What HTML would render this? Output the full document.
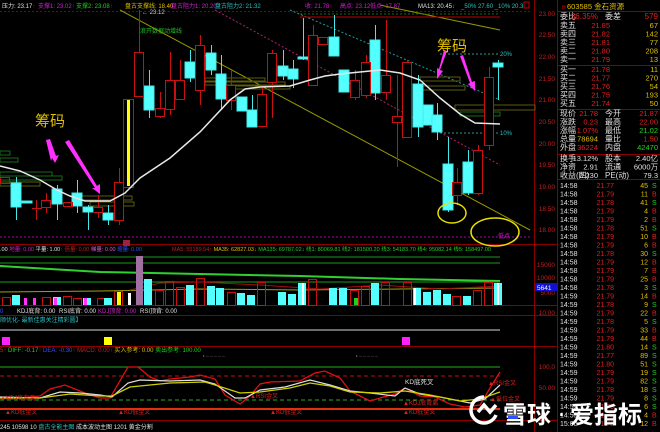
<!DOCTYPE html><html><head><meta charset="utf-8"><style>
body{margin:0;background:#000;width:660px;height:432px;overflow:hidden;font-family:"Liberation Sans","Noto Sans CJK SC",sans-serif}
svg{display:block}
text{font-family:"Liberation Sans","Noto Sans CJK SC",sans-serif}
</style></head><body>
<svg width="660" height="432" viewBox="0 0 660 432" xmlns="http://www.w3.org/2000/svg">
<rect width="660" height="432" fill="#000"/>
<g stroke="#8a0000" stroke-width="1" fill="none">
<line x1="534.5" y1="0" x2="534.5" y2="432"/>
<line x1="557.5" y1="0" x2="557.5" y2="432"/>
<line x1="0" y1="11.5" x2="530" y2="11.5" stroke-dasharray="2,2"/>
<line x1="0" y1="244.5" x2="557" y2="244.5"/>
<line x1="0" y1="305.5" x2="557" y2="305.5"/>
<line x1="0" y1="315.5" x2="557" y2="315.5"/>
<line x1="0" y1="346.5" x2="557" y2="346.5"/>
<line x1="0" y1="420.5" x2="557" y2="420.5"/>
<line x1="557" y1="65.5" x2="660" y2="65.5"/>
<line x1="557" y1="109.5" x2="660" y2="109.5"/>
<line x1="557" y1="154.5" x2="660" y2="154.5"/>
<line x1="557" y1="179.5" x2="660" y2="179.5"/>
<line x1="557" y1="11.5" x2="660" y2="11.5"/>
</g>
<g fill="none" stroke-width="1">
<line x1="120" y1="10" x2="530" y2="230" stroke="#9a9a00"/>
<line x1="380" y1="5" x2="500" y2="30" stroke="#9a9a00"/>
<line x1="215" y1="10" x2="500" y2="165" stroke="#b0206a" stroke-dasharray="2,2"/>
<line x1="290" y1="10" x2="500" y2="100" stroke="#2a9a9a" stroke-dasharray="2,2"/>
<line x1="0" y1="237" x2="530" y2="237" stroke="#b000b0" stroke-dasharray="2,2"/>
<line x1="300" y1="17" x2="500" y2="17" stroke="#c00000"/>
<line x1="300" y1="14" x2="500" y2="14" stroke="#107010" stroke-dasharray="2,2"/>
<line x1="440" y1="54" x2="500" y2="54" stroke="#2a9a9a" stroke-dasharray="2,2"/>
<line x1="440" y1="133" x2="500" y2="133" stroke="#2a9a9a" stroke-dasharray="2,2"/>
</g>
<g fill="none" stroke-width="1">
<rect x="0" y="151" width="10" height="4" stroke="#1a6a1a"/>
<rect x="0" y="158" width="18" height="4" stroke="#1a6a1a"/>
<rect x="0" y="172" width="52" height="4" stroke="#1a6a1a"/>
<rect x="0" y="176" width="62" height="4" stroke="#1a6a1a"/>
<rect x="0" y="182" width="40" height="4" stroke="#5a5a10"/>
<rect x="80" y="196" width="52" height="4" stroke="#5a5a10"/>
<rect x="90" y="202" width="44" height="4" stroke="#5a5a10"/>
<rect x="205" y="78" width="60" height="3" stroke="#5a5a10"/>
<rect x="205" y="82" width="80" height="3" stroke="#5a5a10"/>
<rect x="220" y="86" width="70" height="3" stroke="#5a5a10"/>
<rect x="420" y="77" width="40" height="4" stroke="#5a5a10"/>
<rect x="420" y="86" width="45" height="4" stroke="#5a5a10"/>
<rect x="455" y="105" width="80" height="5" stroke="#5a5a10"/>
<rect x="460" y="112" width="40" height="4" stroke="#1a6a1a"/>
</g>
<g stroke-width="1">
<g stroke="#45e8e8" fill="#54ffff">
<line x1="16.5" y1="177" x2="16.5" y2="220"/><rect x="11" y="183" width="10" height="24"/>
<rect x="22" y="201" width="10" height="2"/>
<line x1="57.5" y1="185" x2="57.5" y2="220"/><rect x="52" y="189" width="10" height="15"/>
<line x1="77.5" y1="180" x2="77.5" y2="213"/><rect x="72" y="193" width="10" height="13"/>
<line x1="88.5" y1="205" x2="88.5" y2="230"/><rect x="83" y="207" width="10" height="5"/>
<line x1="108.5" y1="205" x2="108.5" y2="225"/><rect x="103" y="213" width="10" height="7"/>
<line x1="149.5" y1="70" x2="149.5" y2="118"/><rect x="144" y="86" width="10" height="24"/>
<line x1="190.5" y1="50" x2="190.5" y2="82"/><rect x="185" y="62" width="10" height="16"/>
<line x1="211.5" y1="45" x2="211.5" y2="75"/><rect x="206" y="53" width="10" height="17"/>
<line x1="221.5" y1="55" x2="221.5" y2="110"/><rect x="216" y="74" width="10" height="25"/>
<rect x="237" y="97" width="10" height="14"/>
<line x1="252.5" y1="95" x2="252.5" y2="127"/><rect x="247" y="110" width="10" height="17"/>
<line x1="283.5" y1="50" x2="283.5" y2="80"/><rect x="278" y="66" width="10" height="10"/>
<line x1="293.5" y1="60" x2="293.5" y2="88"/><rect x="288" y="69" width="10" height="10"/>
<line x1="303.5" y1="18" x2="303.5" y2="60"/><rect x="298" y="57" width="10" height="2"/>
<line x1="334.5" y1="15" x2="334.5" y2="56"/><rect x="329" y="37" width="10" height="19"/>
<rect x="339" y="70" width="10" height="22"/>
<line x1="375.5" y1="25" x2="375.5" y2="100"/><rect x="370" y="40" width="10" height="53"/>
<line x1="418.5" y1="75" x2="418.5" y2="137"/><rect x="413" y="84" width="10" height="43"/>
<rect x="423" y="105" width="10" height="20"/>
<line x1="437.5" y1="103" x2="437.5" y2="140"/><rect x="432" y="115" width="10" height="17"/>
<line x1="448.5" y1="137" x2="448.5" y2="212"/><rect x="443" y="164" width="10" height="46"/>
<line x1="468.5" y1="150" x2="468.5" y2="195"/><rect x="463" y="162" width="10" height="31"/>
<line x1="498.5" y1="60" x2="498.5" y2="100"/><rect x="493" y="63" width="10" height="4"/>
</g>
<g stroke="#c81010" fill="none">
<rect x="0.5" y="177.5" width="9" height="6"/>
<line x1="32" y1="208.5" x2="42" y2="208.5"/><line x1="36.5" y1="200" x2="36.5" y2="220"/>
<line x1="46.5" y1="193" x2="46.5" y2="213"/><rect x="41.5" y="200.5" width="9" height="7" fill="#000"/>
<rect x="63.5" y="202.5" width="9" height="4"/>
<line x1="98.5" y1="195" x2="98.5" y2="218"/><rect x="93.5" y="207.5" width="9" height="5" fill="#000"/>
<line x1="119.5" y1="168" x2="119.5" y2="225"/><rect x="114.5" y="182.5" width="9" height="38" fill="#000"/>
<rect x="123.5" y="99.5" width="10" height="88" fill="#000"/>
<line x1="139.5" y1="10" x2="139.5" y2="96"/><rect x="134.5" y="52.5" width="9" height="44" fill="#000"/>
<line x1="160.5" y1="92" x2="160.5" y2="118"/><rect x="155.5" y="108.5" width="9" height="8" fill="#000"/>
<line x1="170.5" y1="52" x2="170.5" y2="115"/><rect x="165.5" y="80.5" width="9" height="29" fill="#000"/>
<line x1="180.5" y1="60" x2="180.5" y2="100"/><rect x="175.5" y="80.5" width="9" height="19" fill="#000"/>
<line x1="200.5" y1="35" x2="200.5" y2="105"/><rect x="195.5" y="45.5" width="9" height="45" fill="#000"/>
<line x1="231.5" y1="70" x2="231.5" y2="110"/><rect x="226.5" y="85.5" width="9" height="15" fill="#000"/>
<line x1="262.5" y1="85" x2="262.5" y2="127"/><rect x="257.5" y="94.5" width="9" height="32" fill="#000"/>
<line x1="272.5" y1="50" x2="272.5" y2="118"/><rect x="267.5" y="53.5" width="9" height="29" fill="#000"/>
<line x1="313.5" y1="25" x2="313.5" y2="85"/><rect x="308.5" y="35.5" width="9" height="50" fill="#000"/>
<rect x="318.5" y="37.5" width="9" height="7" fill="#000"/>
<line x1="355.5" y1="70" x2="355.5" y2="100"/><rect x="350.5" y="80.5" width="9" height="17" fill="#000"/>
<line x1="366.5" y1="55" x2="366.5" y2="98"/><rect x="361.5" y="62.5" width="9" height="33" fill="#000"/>
<line x1="386.5" y1="20" x2="386.5" y2="100"/><rect x="381.5" y="75.5" width="9" height="17" fill="#000"/>
<line x1="397.5" y1="75" x2="397.5" y2="167"/><rect x="392.5" y="116.5" width="9" height="6" fill="#000"/>
<line x1="407.5" y1="60" x2="407.5" y2="137"/><rect x="402.5" y="62.5" width="9" height="75" fill="#000"/>
<line x1="457.5" y1="168" x2="457.5" y2="205"/><rect x="452.5" y="182.5" width="9" height="13" fill="#000"/>
<line x1="478.5" y1="145" x2="478.5" y2="195"/><rect x="473.5" y="150.5" width="9" height="43" fill="#000"/>
<line x1="489.5" y1="67" x2="489.5" y2="150"/><rect x="484.5" y="77.5" width="9" height="68" fill="#000"/>
</g>
<rect x="127" y="100" width="3" height="86" fill="#ffff00"/>
</g>
<polyline fill="none" stroke="#e8e8e8" stroke-width="1.5" points="0,166 20,171 40,180 57,190 70,196 85,201 110,201 125,193 140,178 170,158 200,132 230,100 245,89 260,87 290,86 310,80 325,76 340,74 360,72 380,70 400,73 420,80 440,98 460,114 475,123 500,124"/>
<g fill="#ff30ff">
<polygon points="46,140 50,139 56,156 59,155 55,163 52,158 51,161"/>
<polygon points="65,142 69,140 97,186 100,184 100,194 92,188 95,188"/>
<polygon points="444,50 447,51 440,70 443,71 437,79 437,68 439,69"/>
<polygon points="460,56 463,55 472,82 475,81 475,91 468,84 470,83"/>
</g>
<text x="35" y="126" font-size="15" fill="#e0c000">筹码</text>
<text x="437" y="51" font-size="15" fill="#e0c000">筹码</text>
<ellipse cx="452" cy="213" rx="14" ry="10" fill="none" stroke="#e8e000" stroke-width="1.5"/>
<ellipse cx="495" cy="232" rx="24" ry="14" fill="none" stroke="#e8e000" stroke-width="1.5"/>
<text x="140" y="33" font-size="6" fill="#20c020">浪开数据动增线</text>
<text x="142" y="14" font-size="6" fill="#ccc">← 23.12</text>
<text x="500" y="56" font-size="6" fill="#2ac0c0">20%</text>
<text x="500" y="135" font-size="6" fill="#2ac0c0">10%</text>
<text x="498" y="238" font-size="6" fill="#d020d0">低点</text>
<g font-size="6">
<text x="2" y="8" fill="#e0e0e0">压力: 23.17<tspan fill="#e00">↑</tspan></text>
<text x="38" y="8" fill="#d020d0">支撑1: 23.02<tspan fill="#e00">↑</tspan></text>
<text x="76" y="8" fill="#20d020">支撑2: 23.08<tspan fill="#e00">↑</tspan></text>
<text x="125" y="8" fill="#e0c000">盘古支撑线: 18.40</text>
<text x="171" y="8" fill="#d020d0">盘古阻力1: 20.20</text>
<text x="215" y="8" fill="#2ac0c0">盘古阻力2: 21.32</text>
<text x="305" y="8" fill="#d020d0">收: 21.78<tspan fill="#e00">↑</tspan></text>
<text x="340" y="8" fill="#d020d0">高点: 23.12</text>
<text x="370" y="8" fill="#d020d0">低点: 17.87</text>
<text x="418" y="8" fill="#e0e0e0">MA13: 20.45<tspan fill="#2ac0c0">↓</tspan></text>
<text x="461" y="8" fill="#2ac0c0">_50% 27.60 _10% 20.3</text>
<rect x="524" y="2" width="5" height="6" fill="none" stroke="#c00"/>
</g>
<g font-size="6.5" fill="#c02020" text-anchor="end">
<text x="555" y="16">23.00</text><text x="555" y="37">22.50</text><text x="555" y="59">22.00</text>
<text x="555" y="81">21.50</text><text x="555" y="102">21.00</text><text x="555" y="124">20.50</text>
<text x="555" y="146">20.00</text><text x="555" y="167">19.50</text><text x="555" y="189">19.00</text>
<text x="555" y="211">18.50</text><text x="555" y="232">18.00</text>
<text x="555" y="267">15000</text><text x="555" y="280">10000</text><text x="555" y="295">5000</text>
<text x="555" y="315">10.00</text><text x="555" y="369">100.0</text><text x="555" y="390">50.00</text>
</g>
<rect x="535" y="283" width="22" height="8" fill="#1010d0"/><text x="537" y="290" font-size="6.5" fill="#fff">5641</text>
<g font-size="5.5">
<text x="0" y="251" fill="#e0e0e0">.00 <tspan fill="#d020d0">地量: 0.00</tspan> <tspan fill="#e0e0e0">平量: 1.00</tspan><tspan fill="#e00">↑</tspan> <tspan fill="#c02020">倍量: 0.00</tspan> <tspan fill="#d060d0">梯量: 0.00</tspan> <tspan fill="#3050ff">缩量: 0.00</tspan></text>
<text x="172" y="251" fill="#c02020">MA5: 55189.54<tspan>↑</tspan> <tspan fill="#e0c000">MA35: 62827.03</tspan><tspan fill="#2ac0c0">↓</tspan> <tspan fill="#20d020">MA135: 69787.02</tspan><tspan fill="#2ac0c0">↓</tspan> <tspan fill="#20d020">线1: 80069.81 线2: 181500.20 线3: 54183.70 线4: 95082.14 线5: 158497.00</tspan></text>
</g>
<rect x="123" y="240" width="7" height="6" fill="#a02040"/>
<g fill="none" stroke-width="1">
<line x1="0" y1="257" x2="500" y2="257" stroke="#1a9a1a"/>
<line x1="0" y1="263" x2="500" y2="263" stroke="#1a9a1a"/>
<polyline points="0,266 100,272 200,274 300,276 400,279 500,281" stroke="#30d030" stroke-width="2"/>
<line x1="0" y1="282" x2="500" y2="282" stroke="#1a9a1a"/>
<polyline points="0,292 100,291 200,289 300,290 400,289 500,288" stroke="#a0a010"/>
<polyline points="130,290 160,283 200,282 260,285 320,289 380,285 440,289 500,286" stroke="#a01010"/>
</g>
<g stroke="#c81010" fill="none">
<rect x="2.5" y="297.5" width="8" height="8"/><rect x="42.5" y="297.5" width="8" height="8"/><rect x="63.5" y="296.5" width="8" height="9"/>
<rect x="73.5" y="298.5" width="8" height="7"/><rect x="97.5" y="298.5" width="8" height="7"/><rect x="114.5" y="291.5" width="8" height="14"/>
<rect x="155.5" y="290.5" width="8" height="15"/><rect x="165.5" y="281.5" width="8" height="24"/><rect x="176.5" y="287.5" width="8" height="18"/>
<rect x="196.5" y="278.5" width="8" height="27"/><rect x="227.5" y="292.5" width="8" height="13"/><rect x="257.5" y="282.5" width="8" height="23"/>
<rect x="308.5" y="279.5" width="8" height="26"/><rect x="350.5" y="290.5" width="8" height="15"/><rect x="361.5" y="286.5" width="8" height="19"/>
<rect x="381.5" y="282.5" width="8" height="23"/><rect x="403.5" y="282.5" width="8" height="23"/><rect x="452.5" y="296.5" width="8" height="9"/>
<rect x="473.5" y="290.5" width="8" height="15"/><rect x="484.5" y="282.5" width="8" height="23"/>
</g>
<g fill="#54ffff">
<rect x="12" y="295" width="8" height="10"/><rect x="53" y="297" width="8" height="8"/><rect x="83" y="298" width="8" height="7"/>
<rect x="104" y="298" width="8" height="7"/><rect x="144" y="279" width="8" height="26"/><rect x="186" y="285" width="8" height="20"/>
<rect x="207" y="286" width="8" height="19"/><rect x="216" y="288" width="8" height="17"/><rect x="237" y="293" width="8" height="12"/>
<rect x="247" y="295" width="8" height="10"/><rect x="278" y="292" width="8" height="13"/><rect x="288" y="294" width="8" height="11"/>
<rect x="298" y="283" width="8" height="22"/><rect x="329" y="288" width="8" height="17"/><rect x="339" y="288" width="8" height="17"/>
<rect x="371" y="283" width="8" height="22"/><rect x="413" y="288" width="8" height="17"/><rect x="423" y="292" width="8" height="13"/>
<rect x="433" y="290" width="8" height="15"/><rect x="443" y="294" width="8" height="11"/><rect x="463" y="296" width="8" height="9"/>
<rect x="494" y="283" width="8" height="22"/>
</g>
<rect x="24" y="298" width="3" height="7" fill="#ff30ff"/><rect x="33" y="298" width="3" height="7" fill="#ff30ff"/>
<rect x="54" y="298" width="3" height="7" fill="#ff30ff"/><rect x="84" y="298" width="3" height="7" fill="#ff30ff"/>
<rect x="117" y="292" width="4" height="13" fill="#ffff00"/><rect x="128" y="293" width="3" height="12" fill="#fff"/>
<rect x="136" y="256" width="7" height="49" fill="#a070a0"/><rect x="354" y="298" width="4" height="7" fill="#20d020"/>
<rect x="302" y="283" width="2" height="22" fill="#fff"/><rect x="414" y="288" width="2" height="17" fill="#fff"/><rect x="497" y="283" width="2" height="22" fill="#fff"/>
<g font-size="6">
<text x="0" y="313" fill="#3050ff">0</text>
<text x="17" y="313" fill="#e0e0e0">KDJ底背: 0.00</text><text x="59" y="313" fill="#e0e0e0">RSI底背: 0.00</text>
<text x="98" y="313" fill="#d020d0">KDJ顶背: 0.00</text><text x="140" y="313" fill="#e0e0e0">RSI顶背: 0.00</text>
<text x="0" y="322" fill="#2ac0c0">顺优化- 最新佳惠关注精彩圆】</text>
</g>
<line x1="0" y1="330" x2="500" y2="330" stroke="#909090" stroke-width="1.5"/>
<rect x="2" y="337" width="8" height="8" fill="#ff20ff"/><rect x="104" y="337" width="8" height="8" fill="#ffff00"/><rect x="402" y="337" width="8" height="8" fill="#ff20ff"/>
<g font-size="6">
<text x="0" y="352" fill="#c02020">5↑ <tspan fill="#20d020">DIFF: -0.17</tspan>↑ <tspan fill="#3050ff">DEA: -0.30</tspan>↑ <tspan fill="#c02020">MACD: 0.00↑</tspan> <tspan fill="#e0c000">买入参考: 0.00</tspan> <tspan fill="#20d020">卖出参考: 100.00</tspan></text>
<text x="203" y="357" font-size="4" fill="#ddd">• ……………</text><text x="356" y="357" font-size="4" fill="#ddd">• ……………</text>
</g>
<g fill="none">
<line x1="0" y1="367" x2="500" y2="367" stroke="#20b020"/>
<line x1="0" y1="376" x2="500" y2="376" stroke="#c01010" stroke-dasharray="4,3"/>
<line x1="0" y1="400" x2="500" y2="400" stroke="#20b020" stroke-dasharray="4,3"/>
<line x1="0" y1="409" x2="500" y2="409" stroke="#e03010" stroke-width="2"/>
<polyline stroke="#e01010" stroke-width="1.3" points="0,398 20,398 40,396 50,389 65,385 85,393 100,398 110,398 128,367 138,367 150,377 160,381 170,379 190,377 200,375 215,379 225,395 240,404 250,396 260,384 270,382 300,381 315,373 325,371 340,378 350,391 370,401 380,398 395,394 405,388 420,396 435,397 450,404 465,407 480,405 490,388 500,372"/>
<polyline stroke="#e0e0e0" stroke-width="1.2" points="0,397 40,398 60,392 80,393 100,395 112,397 128,383 140,380 170,381 200,380 215,384 235,398 245,398 260,390 285,387 310,380 330,385 350,391 370,393 395,396 405,388 420,394 440,397 470,403 485,399 500,385"/>
<polyline stroke="#d0d000" stroke-width="1.3" points="0,398 40,398 70,394 100,396 112,396 130,387 170,383 205,382 215,385 240,393 260,392 290,388 310,383 330,386 350,392 380,393 405,391 430,395 460,401 480,399 500,392"/>
</g>
<g font-size="6" fill="#e02020">
<text x="250" y="398">▲RSI金叉</text><text x="488" y="385">▲RSI金叉</text><text x="490" y="401">▲低位金叉</text>
<text x="0" y="400">▲KDJ底背离</text><text x="5" y="414">▲KD低金叉</text><text x="118" y="414">▲KD低金叉</text>
<text x="270" y="414">▲KD低金叉</text><text x="403" y="405">▲KDJ底背离</text><text x="403" y="414">▲KD低金叉</text>
</g>
<text x="405" y="384" font-size="6.5" fill="#e0e0e0">KD底死叉</text>
<g font-size="6">
<text x="0" y="429" fill="#e0e0e0">245  10598  10  <tspan fill="#2ac0c0">盘古全能主图</tspan>  成本波动主图  1201  黄金分割</text>
</g>
<g font-size="8" fill="#e0e0e0">
<text x="562" y="9" font-size="5" fill="#e00">H</text>
<text x="567" y="9" fill="#e0c000" font-size="7.5">603585 金石资源</text>
<text x="560" y="19">委比</text><text x="598" y="19" text-anchor="end" fill="#e02020">36.35%</text><text x="605" y="19">委差</text><text x="658" y="19" text-anchor="end" fill="#e02020">579</text>
</g>
<g font-size="8" fill="#e0e0e0">
<text x="560" y="28">卖五</text><text x="560" y="36.7">卖四</text><text x="560" y="45">卖三</text><text x="560" y="53.7">卖二</text><text x="560" y="62">卖一</text>
<text x="560" y="72">买一</text><text x="560" y="80.7">买二</text><text x="560" y="89">买三</text><text x="560" y="97.7">买四</text><text x="560" y="106">买五</text>
<text x="560" y="116">现价</text><text x="560" y="124.7">涨跌</text><text x="560" y="133">涨幅</text><text x="560" y="141.7">总量</text><text x="560" y="150">外盘</text>
<text x="605" y="116">今开</text><text x="605" y="124.7">最高</text><text x="605" y="133">最低</text><text x="605" y="141.7">量比</text><text x="605" y="150">内盘</text>
<text x="560" y="161">换手</text><text x="560" y="169.7">净资</text><text x="560" y="178">收益(四)</text>
<text x="605" y="161">股本</text><text x="605" y="169.7">流通</text><text x="605" y="178">PE(动)</text>
</g>
<g font-size="7.5" fill="#e02020" text-anchor="end">
<text x="610" y="28">21.85</text><text x="610" y="36.7">21.82</text><text x="610" y="45">21.81</text><text x="610" y="53.7">21.80</text><text x="610" y="62">21.79</text>
<text x="610" y="72">21.78</text><text x="610" y="80.7">21.77</text><text x="610" y="89">21.76</text><text x="610" y="97.7">21.75</text><text x="610" y="106">21.74</text>
<text x="598" y="116">21.78</text><text x="598" y="124.7">0.23</text><text x="598" y="133">1.07%</text><text x="598" y="141.7" fill="#e0c000">78694</text><text x="598" y="150">36224</text>
<text x="658" y="116">21.87</text><text x="658" y="124.7">22.00</text><text x="658" y="133" fill="#20d020">21.02</text><text x="658" y="141.7">1.50</text><text x="658" y="150" fill="#20d020">42470</text>
<text x="598" y="161" fill="#e0e0e0">13.12%</text><text x="598" y="169.7" fill="#e0e0e0">2.91</text><text x="598" y="178" fill="#e0e0e0">0.230</text>
<text x="658" y="161" fill="#e0e0e0">2.40亿</text><text x="658" y="169.7" fill="#e0e0e0">6000万</text><text x="658" y="178" fill="#e0e0e0">79.3</text>
<g fill="#e0c000"><text x="658" y="28">67</text><text x="658" y="36.7">142</text><text x="658" y="45">77</text><text x="658" y="53.7">208</text><text x="658" y="62">13</text>
<text x="658" y="72">11</text><text x="658" y="80.7">270</text><text x="658" y="89">54</text><text x="658" y="97.7">193</text><text x="658" y="106">50</text></g>
</g>
<g font-size="7">
<g fill="#e0e0e0">
<text x="560" y="188">14:58</text><text x="560" y="196.5">14:58</text><text x="560" y="205">14:58</text><text x="560" y="213.5">14:58</text><text x="560" y="222">14:58</text>
<text x="560" y="230.5">14:58</text><text x="560" y="239">14:58</text><text x="560" y="247.5">14:58</text><text x="560" y="256">14:58</text><text x="560" y="264.5">14:58</text>
<text x="560" y="273">14:58</text><text x="560" y="281.5">14:58</text><text x="560" y="290">14:58</text><text x="560" y="298.5">14:59</text><text x="560" y="307">14:59</text>
<text x="560" y="315.5">14:59</text><text x="560" y="324">14:59</text><text x="560" y="332.5">14:59</text><text x="560" y="341">14:59</text><text x="560" y="349.5">14:59</text>
<text x="560" y="358">14:59</text><text x="560" y="366.5">14:59</text><text x="560" y="375">14:59</text><text x="560" y="383.5">14:59</text><text x="560" y="392">14:59</text>
<text x="560" y="400.5">14:59</text><text x="560" y="409">14:59</text><text x="560" y="417.5">14:59</text><text x="560" y="426">15:00</text>
</g>
<g fill="#e02020" text-anchor="end">
<text x="614" y="188">21.77</text><text x="614" y="196.5">21.79</text><text x="614" y="205">21.78</text><text x="614" y="213.5">21.79</text><text x="614" y="222">21.79</text>
<text x="614" y="230.5">21.78</text><text x="614" y="239">21.79</text><text x="614" y="247.5">21.79</text><text x="614" y="256">21.78</text><text x="614" y="264.5">21.79</text>
<text x="614" y="273">21.79</text><text x="614" y="281.5">21.79</text><text x="614" y="290">21.78</text><text x="614" y="298.5">21.79</text><text x="614" y="307">21.78</text>
<text x="614" y="315.5">21.79</text><text x="614" y="324">21.78</text><text x="614" y="332.5">21.79</text><text x="614" y="341">21.79</text><text x="614" y="349.5">21.80</text>
<text x="614" y="358">21.77</text><text x="614" y="366.5">21.80</text><text x="614" y="375">21.79</text><text x="614" y="383.5">21.79</text><text x="614" y="392">21.78</text>
<text x="614" y="400.5">21.79</text><text x="614" y="409">21.79</text><text x="614" y="417.5">21.78</text><text x="614" y="426">21.78</text>
</g>
<g fill="#e0c000" text-anchor="end">
<text x="648" y="188">45</text><text x="648" y="196.5">11</text><text x="648" y="205">41</text><text x="648" y="213.5">4</text><text x="648" y="222">2</text>
<text x="648" y="230.5">51</text><text x="648" y="239">10</text><text x="648" y="247.5">6</text><text x="648" y="256">30</text><text x="648" y="264.5">12</text>
<text x="648" y="273">7</text><text x="648" y="281.5">25</text><text x="648" y="290">3</text><text x="648" y="298.5">14</text><text x="648" y="307">9</text>
<text x="648" y="315.5">22</text><text x="648" y="324">5</text><text x="648" y="332.5">33</text><text x="648" y="341">44</text><text x="648" y="349.5">14</text>
<text x="648" y="358">89</text><text x="648" y="366.5">51</text><text x="648" y="375">19</text><text x="648" y="383.5">82</text><text x="648" y="392">18</text>
<text x="648" y="400.5">8</text><text x="648" y="409">6</text><text x="648" y="417.5">4</text><text x="648" y="426">12</text>
</g>
<g font-size="7">
<text x="652" y="188" fill="#20d020">S</text><text x="652" y="196.5" fill="#e02020">B</text><text x="652" y="205" fill="#20d020">S</text><text x="652" y="213.5" fill="#e02020">B</text><text x="652" y="222" fill="#e02020">B</text>
<text x="652" y="230.5" fill="#20d020">S</text><text x="652" y="239" fill="#e02020">B</text><text x="652" y="247.5" fill="#e02020">B</text><text x="652" y="256" fill="#20d020">S</text><text x="652" y="264.5" fill="#e02020">B</text>
<text x="652" y="273" fill="#e02020">B</text><text x="652" y="281.5" fill="#e02020">B</text><text x="652" y="290" fill="#20d020">S</text><text x="652" y="298.5" fill="#e02020">B</text><text x="652" y="307" fill="#20d020">S</text>
<text x="652" y="315.5" fill="#e02020">B</text><text x="652" y="324" fill="#20d020">S</text><text x="652" y="332.5" fill="#e02020">B</text><text x="652" y="341" fill="#e02020">B</text><text x="652" y="349.5" fill="#20d020">S</text>
<text x="652" y="358" fill="#20d020">S</text><text x="652" y="366.5" fill="#20d020">S</text><text x="652" y="375" fill="#20d020">S</text><text x="652" y="383.5" fill="#20d020">S</text><text x="652" y="392" fill="#20d020">S</text>
<text x="652" y="400.5" fill="#20d020">S</text><text x="652" y="409" fill="#20d020">S</text><text x="652" y="417.5" fill="#e02020">B</text><text x="652" y="426" fill="#e02020">B</text>
</g>
</g>
<g stroke="#fff" stroke-width="3.5" fill="none">
<path d="M484,397 a13,13 0 1 0 12,18"/>
<path d="M478,412 l6,-7 l6,7 l6,-7"/>
</g>
<text x="503" y="423" font-size="24" font-weight="bold" fill="#fff">雪球</text>
<text x="559" y="421" font-size="18" font-weight="bold" fill="#fff">·</text>
<text x="570" y="423" font-size="24" font-weight="bold" fill="#fff">爱指标</text>
<rect x="508" y="416" width="10" height="3" fill="#3050ff"/>
</svg>
</body></html>
